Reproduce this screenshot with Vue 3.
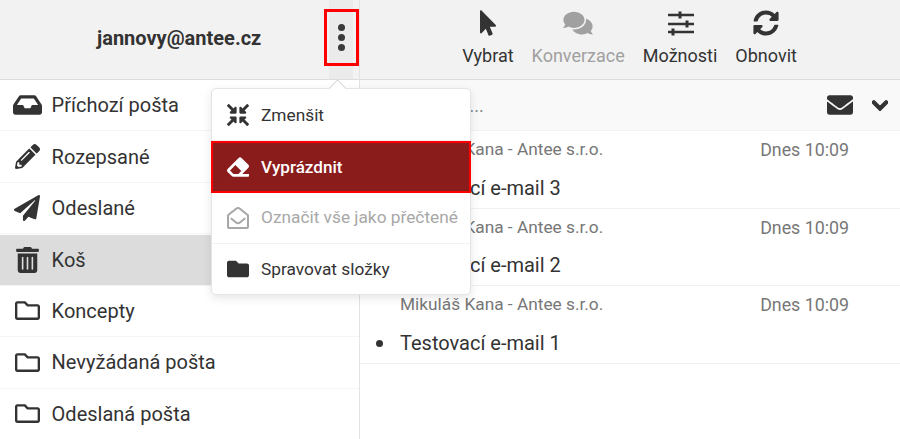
<script setup>
const icons = {
  inbox: ['0 0 576 512', 'M567.938 243.908L462.25 85.374A48.003 48.003 0 0 0 422.311 64H153.689a48 48 0 0 0-39.938 21.374L8.062 243.908A47.994 47.994 0 0 0 0 270.533V400c0 26.51 21.49 48 48 48h480c26.51 0 48-21.49 48-48V270.533a47.994 47.994 0 0 0-8.062-26.625zM162.252 128h251.497l85.333 128H376l-32 64H232l-32-64H76.918l85.334-128z'],
  pencil: ['0 0 512 512', 'M497.9 142.1l-46.1 46.1c-4.7 4.7-12.3 4.7-17 0l-111-111c-4.7-4.7-4.7-12.3 0-17l46.1-46.1c18.7-18.7 49.1-18.7 67.9 0l60.1 60.1c18.8 18.7 18.8 49.1 0 67.9zM284.2 99.8L21.6 362.4.4 483.9c-2.9 16.4 11.4 30.6 27.8 27.8l121.5-21.3 262.6-262.6c4.7-4.7 4.7-12.3 0-17l-111-111c-4.8-4.7-12.4-4.7-17.1 0zM124.1 339.9c-5.5-5.5-5.5-14.3 0-19.8l154-154c5.5-5.5 14.3-5.5 19.8 0s5.5 14.3 0 19.8l-154 154c-5.5 5.5-14.3 5.5-19.8 0zM88 424h48v36.3l-64.5 11.3-31.1-31.1L51.7 376H88v48z'],
  plane: ['0 0 512 512', 'M476 3.2L12.5 270.6c-18.1 10.4-15.8 35.6 2.2 43.2L121 358.4l287.3-253.2c5.5-4.9 13.3 2.6 8.6 8.3L176 407v80.5c0 23.6 28.5 32.9 42.5 15.8L282 426l124.6 52.2c14.2 6 30.4-2.9 33-18.2l72-432C515 7.8 493.3-6.8 476 3.2z'],
  trash: ['0 0 448 512', 'M32 464a48 48 0 0 0 48 48h288a48 48 0 0 0 48-48V128H32zm272-256a16 16 0 0 1 32 0v224a16 16 0 0 1-32 0zm-96 0a16 16 0 0 1 32 0v224a16 16 0 0 1-32 0zm-96 0a16 16 0 0 1 32 0v224a16 16 0 0 1-32 0zM432 32H312l-9.4-18.7A24 24 0 0 0 281.1 0H166.8a23.72 23.72 0 0 0-21.4 13.3L136 32H16A16 16 0 0 0 0 48v32a16 16 0 0 0 16 16h416a16 16 0 0 0 16-16V48a16 16 0 0 0-16-16z'],
  folderO: ['0 0 512 512', 'M464 128H272l-54.63-54.63c-6-6-14.14-9.37-22.63-9.37H48C21.49 64 0 85.49 0 112v288c0 26.51 21.49 48 48 48h416c26.51 0 48-21.49 48-48V176c0-26.51-21.49-48-48-48zm0 272H48V112h140.12l54.63 54.63c6 6 14.14 9.37 22.63 9.37H464v224z'],
  folder: ['0 0 512 512', 'M464 128H272l-64-64H48C21.49 64 0 85.49 0 112v288c0 26.51 21.49 48 48 48h416c26.51 0 48-21.49 48-48V176c0-26.51-21.49-48-48-48z'],
  compress: ['0 0 512 512', 'M200 288H88c-21.4 0-32.1 25.8-17 41l32.9 31-99.2 99.3c-6.2 6.2-6.2 16.4 0 22.6l25.4 25.4c6.2 6.2 16.4 6.2 22.6 0L152 408l31.1 33c15.1 15.1 40.9 4.4 40.9-17V312c0-13.3-10.7-24-24-24zm112-64h112c21.4 0 32.1-25.9 17-41l-33-31 99.3-99.3c6.2-6.2 6.2-16.4 0-22.6L481.9 4.7c-6.2-6.2-16.4-6.2-22.6 0L360 104l-31.1-33C313.8 55.9 288 66.6 288 88v112c0 13.3 10.7 24 24 24zm96 136l33-31.1c15.1-15.1 4.4-40.9-17-40.9H312c-13.3 0-24 10.7-24 24v112c0 21.4 25.9 32.1 41 17l31-32.9 99.3 99.3c6.2 6.2 16.4 6.2 22.6 0l25.4-25.4c6.2-6.2 6.2-16.4 0-22.6L408 360zM183 71.1L152 104 52.7 4.7c-6.2-6.2-16.4-6.2-22.6 0L4.7 30.1c-6.2 6.2-6.2 16.4 0 22.6L104 152l-33 31.1C55.9 198.2 66.6 224 88 224h112c13.3 0 24-10.7 24-24V88c0-21.3-25.9-32-41-16.9z'],
  eraser: ['0 0 512 512', 'M497.941 273.941c18.745-18.745 18.745-49.137 0-67.882l-160-160c-18.745-18.745-49.136-18.746-67.883 0l-256 256c-18.745 18.745-18.745 49.137 0 67.882l96 96A48.004 48.004 0 0 0 144 480h356c6.627 0 12-5.373 12-12v-40c0-6.627-5.373-12-12-12H355.883l142.058-142.059zm-302.627-62.627l137.373 137.373L265.373 416H150.628l-80-80 124.686-124.686z'],
  open: ['0 0 512 512', 'M494.586 164.516c-4.697-3.883-111.723-89.95-135.251-108.657C337.231 38.191 299.437 0 256 0c-43.205 0-80.636 37.717-103.335 55.859-24.463 19.45-131.07 105.195-135.15 108.549A48.004 48.004 0 0 0 0 201.485V464c0 26.51 21.49 48 48 48h416c26.51 0 48-21.49 48-48V201.509a48 48 0 0 0-17.414-36.993zM464 458a6 6 0 0 1-6 6H54a6 6 0 0 1-6-6V204.347c0-1.813.816-3.526 2.226-4.665 15.87-12.814 108.793-87.554 132.364-106.293C200.755 78.88 232.398 48 256 48c23.693 0 55.857 31.369 73.41 45.389 23.573 18.741 116.503 93.493 132.366 106.316a5.99 5.99 0 0 1 2.224 4.663V458zm-31.991-187.704c4.249 5.159 3.465 12.795-1.745 16.981-28.975 23.283-59.274 47.597-70.929 56.863C336.636 362.283 299.205 400 256 400c-43.452 0-81.287-38.237-103.335-55.86-11.279-8.967-41.744-33.413-70.927-56.865-5.21-4.187-5.993-11.822-1.745-16.981l15.258-18.528c4.178-5.073 11.657-5.843 16.779-1.726 28.618 23.001 58.566 47.035 70.56 56.571C200.143 320.631 232.307 352 256 352c23.602 0 55.246-30.88 73.41-45.389 11.994-9.535 41.944-33.57 70.563-56.572 5.122-4.117 12.601-3.347 16.778 1.726l15.258 18.531z'],
  comments: ['0 0 576 512', 'M416 192c0-88.4-93.1-160-208-160S0 103.6 0 192c0 34.3 14.1 65.9 38 92-13.4 30.2-35.5 54.2-35.8 54.5-2.2 2.3-2.8 5.7-1.5 8.7S4.8 352 8 352c36.6 0 66.9-12.3 88.7-25 32.2 15.7 70.3 25 111.3 25 114.9 0 208-71.6 208-160zm122 220c23.9-26 38-57.7 38-92 0-66.9-53.5-124.2-129.3-148.1.9 6.6 1.3 13.3 1.3 20.1 0 105.9-107.7 192-240 192-10.8 0-21.3-.8-31.7-1.9C207.8 439.6 281.8 480 368 480c41 0 79.1-9.2 111.3-25 21.8 12.7 52.1 25 88.7 25 3.2 0 6.1-1.9 7.3-4.8 1.3-2.9.7-6.3-1.5-8.7-.3-.3-22.4-24.2-35.8-54.5z'],
  pointer: ['0 0 320 512', 'M302.189 329.126H196.105l55.831 135.993c3.889 9.428-.555 19.999-9.444 23.999l-49.165 21.427c-9.165 4-19.443-.571-23.332-9.714l-53.053-129.136-86.664 89.138C18.729 472.71 0 463.554 0 447.977V18.299C0 1.899 19.921-6.096 30.277 5.443l284.412 292.542c11.472 11.179 3.007 31.141-12.5 31.141z'],
  sliders: ['0 0 27 26', 'M1 3.7h26v2.6H1zM11.5 1.5h3v7h-3zM1 12.7h26v2.6H1zM18.5 10.5h3v7h-3zM1 20.7h26v2.6H1zM4.5 18.5h3v7h-3z'],
  sync: ['0 0 512 512', 'M370.72 133.28C339.458 104.008 298.888 87.962 255.848 88c-77.458.068-144.328 53.178-162.791 126.85-1.344 5.363-6.122 9.15-11.651 9.15H24.103c-7.498 0-13.194-6.807-11.807-14.176C33.933 94.924 134.813 8 256 8c66.448 0 126.791 26.136 171.315 68.685L463.03 40.97C478.149 25.851 504 36.559 504 57.941V192c0 13.255-10.745 24-24 24H345.941c-21.382 0-32.09-25.851-16.971-40.971l41.75-41.749zM32 296h134.059c21.382 0 32.09 25.851 16.971 40.971l-41.75 41.75c31.262 29.273 71.835 45.319 114.876 45.28 77.418-.07 144.315-53.144 162.787-126.849 1.344-5.363 6.122-9.15 11.651-9.15h57.304c7.498 0 13.194 6.807 11.807 14.176C478.067 417.076 377.187 504 256 504c-66.448 0-126.791-26.136-171.315-68.685L48.97 471.03C33.851 486.149 8 475.441 8 454.059V320c0-13.255 10.745-24 24-24z'],
  envelope: ['0 0 512 512', 'M502.3 190.8c3.9-3.1 9.7-.2 9.7 4.7V400c0 26.5-21.5 48-48 48H48c-26.5 0-48-21.5-48-48V195.6c0-5 5.7-7.8 9.7-4.7 22.4 17.4 52.1 39.5 154.1 113.6 21.1 15.4 56.7 47.8 92.2 47.6 35.7.3 72-32.8 92.3-47.6 102-74.1 131.6-96.3 154-113.7zM256 320c23.2.4 56.6-29.2 73.4-41.4 132.7-96.3 142.8-104.7 173.4-128.7 5.8-4.5 9.2-11.5 9.2-18.9v-19c0-26.5-21.5-48-48-48H48C21.5 64 0 85.5 0 112v19c0 7.4 3.4 14.3 9.2 18.9 30.6 23.9 40.7 32.4 173.4 128.7 16.8 12.2 50.2 41.8 73.4 41.4z'],
  chevron: ['0 0 448 512', 'M207.029 381.476L12.686 187.132c-9.373-9.373-9.373-24.569 0-33.941l22.667-22.667c9.357-9.357 24.522-9.375 33.901-.04L224 284.505l154.745-154.021c9.379-9.335 24.544-9.317 33.901.04l22.667 22.667c9.373 9.373 9.373 24.569 0 33.941L240.971 381.476c-9.373 9.372-24.569 9.372-33.942 0z'],
}
const folders = [
  { name: 'Příchozí pošta', icon: icons.inbox, cls: 'i-inbox' },
  { name: 'Rozepsané', icon: icons.pencil, cls: 'i-pencil' },
  { name: 'Odeslané', icon: icons.plane, cls: 'i-plane' },
  { name: 'Koš', icon: icons.trash, cls: 'i-trash', active: true },
  { name: 'Koncepty', icon: icons.folderO, cls: 'i-folder' },
  { name: 'Nevyžádaná pošta', icon: icons.folderO, cls: 'i-folder' },
  { name: 'Odeslaná pošta', icon: icons.folderO, cls: 'i-folder' },
]
const tools = [
  { label: 'Vybrat', icon: icons.pointer, cls: 't-pointer' },
  { label: 'Konverzace', icon: icons.comments, cls: 't-comments', off: true },
  { label: 'Možnosti', icon: icons.sliders, cls: 't-sliders' },
  { label: 'Obnovit', icon: icons.sync, cls: 't-sync' },
]
const mails = ['Testovací e-mail 3', 'Testovací e-mail 2', 'Testovací e-mail 1']
const menu = [
  { label: 'Zmenšit', icon: icons.compress },
  { label: 'Vyprázdnit', icon: icons.eraser, danger: true },
  { label: 'Označit vše jako přečtené', icon: icons.open, off: true },
  { label: 'Spravovat složky', icon: icons.folder },
]
</script>

<template>
  <div class="app">
    <aside class="side">
      <div class="account">
        <span class="email">jannovy@antee.cz</span>
        <button class="dots" aria-label="Menu"><i></i><i></i><i></i></button>
      </div>
      <ul class="folders">
        <li v-for="f in folders" :key="f.name" class="folder" :class="{ active: f.active }">
          <span class="f-icon">
            <svg :class="f.cls" :viewBox="f.icon[0]"><path :d="f.icon[1]" /></svg>
          </span>
          <span>{{ f.name }}</span>
        </li>
      </ul>
    </aside>

    <main class="main">
      <div class="toolbar">
        <div v-for="t in tools" :key="t.label" class="tool" :class="{ off: t.off }">
          <svg :class="t.cls" :viewBox="t.icon[0]"><path :d="t.icon[1]" /></svg>
          <span>{{ t.label }}</span>
        </div>
      </div>
      <div class="search">
        <span class="placeholder">Vyhledat...</span>
        <svg class="s-env" :viewBox="icons.envelope[0]"><path :d="icons.envelope[1]" /></svg>
        <svg class="s-chev" :viewBox="icons.chevron[0]"><path :d="icons.chevron[1]" /></svg>
      </div>
      <ul class="mails">
        <li v-for="m in mails" :key="m" class="mail">
          <div class="meta">
            <span>Mikuláš Kana - Antee s.r.o.</span>
            <span class="time">Dnes 10:09</span>
          </div>
          <div class="subject"><i class="unread"></i>{{ m }}</div>
        </li>
      </ul>
    </main>

    <div class="popup">
      <span class="arrow"></span>
      <div
        v-for="item in menu"
        :key="item.label"
        class="item"
        :class="{ danger: item.danger, off: item.off }"
      >
        <svg :viewBox="item.icon[0]"><path :d="item.icon[1]" /></svg>
        <span>{{ item.label }}</span>
      </div>
    </div>
    <div class="mark"></div>
  </div>
</template>

<style>
html, body { margin: 0; background: #fff; overflow: hidden; }
</style>

<style scoped>
* { box-sizing: border-box; }
ul { list-style: none; margin: 0; padding: 0; }
svg { display: block; fill: currentColor; }

.app {
  position: relative;
  display: flex;
  width: 900px;
  height: 439px;
  overflow: hidden;
  font-family: Roboto, "Liberation Sans", sans-serif;
  color: #333;
  background: #fff;
}

.side {
  flex: 0 0 360px;
  border-right: 1px solid #e3e3e3;
}
.account {
  display: flex;
  height: 80px;
  align-items: stretch;
  background: #f2f2f2;
  border-bottom: 1px solid #dcdcdc;
  padding-left: 97px;
}
.email {
  align-self: center;
  margin-top: -4px;
  font-size: 20px;
  font-weight: 700;
  line-height: 24px;
}
.dots {
  display: flex;
  flex-direction: column;
  justify-content: center;
  align-items: center;
  gap: 2.6px;
  width: 24px;
  margin-left: 68px;
  padding: 0 0 4px;
  border: 0;
  background: #ebebeb;
}
.dots i {
  width: 7px;
  height: 7px;
  border-radius: 50%;
  background: #3a3a3a;
}

.folder {
  display: flex;
  align-items: center;
  height: 51.45px;
  padding-left: 12px;
  font-size: 20px;
  border-bottom: 1px solid #f4f4f4;
}
.folder.active {
  background: #dcdcdc;
  background-clip: padding-box;
  border-top: 1px solid #fff;
}
.f-icon {
  display: flex;
  justify-content: center;
  align-items: center;
  width: 30px;
  margin-right: 9.6px;
}
.i-inbox { width: 29px; height: 26px; }
.i-pencil { width: 25px; height: 25px; }
.i-plane { width: 26px; height: 26px; }
.i-trash { width: 23px; height: 26px; }
.i-folder { width: 25px; height: 25px; }

.main { flex: 1; min-width: 0; }
.toolbar {
  display: flex;
  height: 80px;
  gap: 18px;
  padding: 10px 0 0 102.2px;
  background: #f2f2f2;
  border-bottom: 1px solid #dcdcdc;
}
.tool {
  display: flex;
  flex-direction: column;
  align-items: center;
  font-size: 18px;
  line-height: 22px;
}
.tool svg { height: 26px; margin-bottom: 9px; }
.tool.off { color: #a0a0a0; }
.t-pointer { width: 16px; }
.t-comments { width: 30px; }
.t-sliders { width: 27px; }
.t-sync { width: 26px; }

.search {
  display: flex;
  align-items: center;
  height: 51.4px;
  padding: 0 12px 0 40px;
  background: #f9f9f9;
  border-bottom: 1px solid #f2f2f2;
}
.placeholder { flex: 1; font-size: 18px; color: #888; }
.s-env { width: 26px; height: 26px; margin-right: 19px; }
.s-chev { width: 16px; height: 19px; }
.s-chev path { stroke: currentColor; stroke-width: 36; }

.mail {
  height: 77.4px;
  padding: 7px 51px 0 40px;
  border-bottom: 1px solid #f0f0f0;
}
.meta {
  display: flex;
  justify-content: space-between;
  height: 23px;
  font-size: 17.3px;
  line-height: 23px;
  color: #777;
}
.time { font-size: 17.8px; }
.subject {
  position: relative;
  margin-top: 14.5px;
  font-size: 20px;
  line-height: 24px;
}
.unread {
  position: absolute;
  left: -24px;
  top: 9px;
  width: 7px;
  height: 7px;
  border-radius: 50%;
  background: #333;
}

.popup {
  position: absolute;
  left: 211px;
  top: 88px;
  width: 260px;
  height: 207px;
  padding-top: 1px;
  background: #fff;
  border: 1px solid #e4e4e4;
  border-radius: 5px;
  box-shadow: 0 3px 10px rgba(0, 0, 0, 0.1);
}
.arrow {
  position: absolute;
  left: 119px;
  top: -7px;
  width: 13px;
  height: 13px;
  background: #fff;
  border-left: 1px solid #d8d8d8;
  border-top: 1px solid #d8d8d8;
  transform: rotate(45deg);
}
.item {
  position: relative;
  display: flex;
  align-items: center;
  height: 51.25px;
  padding-left: 15px;
  font-size: 17.3px;
  border-bottom: 1px solid #f2f2f2;
}
.item:last-child { border-bottom: 0; }
.item svg { width: 22px; height: 22px; margin-right: 12px; }
.item.off { color: #a8a8a8; }
.item.off span { margin-top: -1px; }
.item.danger {
  color: #fff;
  font-weight: 500;
  font-size: 17.1px;
  background: #8b1c1c;
  border: 2px solid #f00;
  margin: 0 -1px;
  padding-left: 14px;
}
.mark {
  position: absolute;
  left: 324px;
  top: 9px;
  width: 35px;
  height: 57px;
  border: 3px solid #f00;
}
</style>
